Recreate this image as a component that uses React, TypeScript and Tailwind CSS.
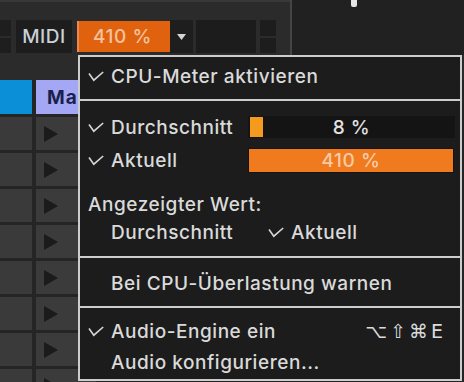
import React from 'react';

const Check = () => (
  <svg width="16" height="11" viewBox="0 0 16 11" className="shrink-0">
    <polyline points="1,2.5 5.8,9.2 15.2,1" fill="none" stroke="#d6d6d6" strokeWidth="1.6" />
  </svg>
);

const Play = () => (
  <svg width="14" height="16" viewBox="0 0 14 16">
    <polygon points="0,0 14,8 0,16" fill="#1b1b1b" />
  </svg>
);

function MenuRow({ checked, children, className = '' }: { checked?: boolean; children: React.ReactNode; className?: string }) {
  return (
    <div className={`flex items-center h-[26px] pl-[8px] ${className}`}>
      <div className="w-[23px] flex items-center">{checked && <Check />}</div>
      {children}
    </div>
  );
}

export default function App() {
  const rows = [0, 1, 2, 3, 4, 5, 6, 7];
  return (
    <div className="w-[464px] h-[382px] relative overflow-hidden bg-[#2b2b2b] font-['Inter',sans-serif] font-medium text-[19px] tracking-[0.55px] leading-none">
      {/* top bar */}
      <div className="h-[55px] flex">
        <div className="w-[290px] border-t-2 border-[#383838] pt-[18px] flex">
          <div className="w-[11px] flex flex-col gap-[2px]">
            <div className="h-[16px] bg-[#1e1e1e]" />
            <div className="h-[15px] bg-[#1e1e1e]" />
          </div>
          <div className="ml-[5px] w-[56px] h-[33px] bg-[#1d1d1d] flex items-center justify-center text-[#c9d0d6]">
            MIDI
          </div>
          <div className="ml-[5px] w-[93px] h-[31px] mt-[1px] bg-[#e0620f] border-l-2 border-[#f3864a] flex items-center pl-[14px] text-[#f3c29c]">
            410 %
          </div>
          <div className="w-[23px] h-[33px] bg-[#1e1e1e] flex items-center justify-center">
            <svg width="9" height="6" viewBox="0 0 9 6">
              <polygon points="0,0 9,0 4.5,6" fill="#d4d4d4" />
            </svg>
          </div>
          <div className="ml-[3px] w-[60px] h-[33px] bg-[#1c1c1c]" />
          <div className="ml-[4px] w-[16px] flex flex-col gap-[2px]">
            <div className="h-[16px] bg-[#1d1d1d]" />
            <div className="h-[15px] bg-[#1d1d1d]" />
          </div>
        </div>
        <div className="w-[2px] bg-[#454545]" />
        <div className="flex-1 bg-[#212121]">
          <div className="ml-[59px] w-[6px] h-[7px] bg-[#e6e6e6] rounded-b-[2px]" />
        </div>
      </div>

      {/* tracks */}
      <div className="mt-[25px] bg-[#252525] h-[302px]">
        <div className="flex h-[34px]">
          <div className="w-[32px] bg-[#0b8fd6]" />
          <div className="ml-[4px] w-[60px] bg-[#a3a7f4] flex items-center pl-[11px] text-[#1a1f4d] font-bold tracking-[1px]">
            Mas
          </div>
        </div>
        {rows.map((r) => (
          <div key={r} className="flex h-[33px] mt-[3px]">
            <div className="w-[32px] bg-[#3a3a3a]" />
            <div className="ml-[4px] w-[60px] bg-[#3b3b3b] flex items-center pl-[8px]">
              <Play />
            </div>
          </div>
        ))}
      </div>

      {/* CPU menu */}
      <div className="absolute left-[78px] top-[55px] w-[384px] h-[326px] border-2 border-[#cdcdcd] bg-[#1c1c1c] text-[#dadada] flex flex-col">
        <MenuRow checked className="h-[38px]">CPU-Meter aktivieren</MenuRow>
        <div className="mt-[4px] h-[2px] bg-[#cdcdcd]" />

        <div className="mt-[13px] flex items-center h-[26px]">
          <div className="w-[168px] flex items-center pl-[8px]">
            <div className="w-[23px] flex items-center"><Check /></div>
            Durchschnitt
          </div>
          <div className="relative w-[207px] h-[22px] bg-[#141414] flex items-center justify-center">
            <div className="absolute left-[2px] top-[1px] w-[13px] h-[20px] bg-[#f39a1f]" />
            <span className="relative text-[#e2e2e2]">8 %</span>
          </div>
        </div>

        <div className="mt-[8px] flex items-center h-[25px]">
          <div className="w-[168px] flex items-center pl-[8px]">
            <div className="w-[23px] flex items-center"><Check /></div>
            Aktuell
          </div>
          <div className="w-[206px] h-[25px] bg-[#141414] p-[1px]">
            <div className="w-full h-full bg-[#f07a1e] flex items-center justify-center text-[#f6cba8]">410 %</div>
          </div>
        </div>

        <div className="mt-[18px] flex items-center h-[26px] pl-[8px]">Angezeigter Wert:</div>
        <MenuRow className="mt-[2px]">
          <span className="w-[157px]">Durchschnitt</span>
          <div className="w-[23px] flex items-center"><Check /></div>
          Aktuell
        </MenuRow>
        <div className="mt-[11px] h-[2px] bg-[#cdcdcd]" />

        <MenuRow className="mt-[12px]">Bei CPU-Überlastung warnen</MenuRow>
        <div className="mt-[10px] h-[2px] bg-[#cdcdcd]" />

        <MenuRow checked className="mt-[10px]">
          Audio-Engine ein
          <span className="ml-auto pr-[14px] text-[19px] font-['DejaVu_Sans',sans-serif] font-normal tracking-[3px]">⌥⇧⌘E</span>
        </MenuRow>
        <MenuRow className="mt-[5px]">Audio konfigurieren...</MenuRow>
      </div>
    </div>
  );
}
